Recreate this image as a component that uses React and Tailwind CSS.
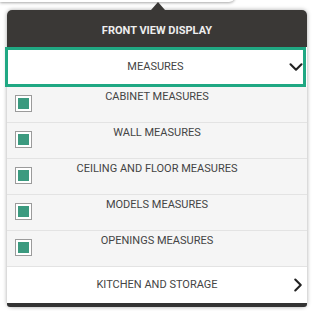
import React from "react";
import { ChevronDown, ChevronRight } from "lucide-react";

const items = [
  "CABINET MEASURES",
  "WALL MEASURES",
  "CEILING AND FLOOR MEASURES",
  "MODELS MEASURES",
  "OPENINGS MEASURES",
];

const Checkbox = () => (
  <div className="w-[17px] h-[17px] border border-[#9b9b9b] bg-white p-[2px]">
    <div className="w-full h-full bg-[#3b9a7f]" />
  </div>
);

const App = () => {
  return (
    <div
      className="relative w-[313px] h-[311px] bg-white overflow-hidden"
      style={{ fontFamily: "Roboto, 'Liberation Sans', sans-serif" }}
    >
      {/* button above the popover */}
      <div className="absolute left-0 -top-[20px] w-[235px] h-[22px] bg-white rounded-br-[6px] shadow-[0_1px_3px_rgba(0,0,0,0.35)]" />

      <div className="relative ml-[7px] mt-[10px] w-[300px] shadow-[0_0_4px_rgba(0,0,0,0.35)] rounded-[5px]">
        {/* caret */}
        <div className="absolute left-[144px] -top-[8px] w-0 h-0 border-l-[7px] border-r-[7px] border-b-[8px] border-l-transparent border-r-transparent border-b-[#3a3836]" />

        {/* Header */}
        <div className="h-[37px] bg-[#3a3836] rounded-t-[5px] flex items-center justify-center pt-[6px]">
          <span className="text-[11px] font-bold text-[#eeeeee]">FRONT VIEW DISPLAY</span>
        </div>

        {/* Select */}
        <div className="relative -ml-[2px] w-[301px] h-[40px] border-[3px] border-[#20a883] bg-white grid grid-cols-[14px_1fr_14px] items-center">
          <span />
          <span className="text-center text-[11px] text-[#444444]">MEASURES</span>
          <ChevronDown className="w-[22px] h-[22px] text-[#222222] justify-self-center" strokeWidth={2.3} />
        </div>

        {/* Options */}
        {items.map((label) => (
          <div
            key={label}
            className="h-[36px] bg-[#f5f5f5] border-b border-[#e3e3e3] grid grid-cols-[26px_1fr_26px]"
          >
            <div className="pl-[8px] pt-[8px]">
              <Checkbox />
            </div>
            <span className="text-center text-[11px] text-[#444444] pt-[3px] leading-[13px]">{label}</span>
            <span />
          </div>
        ))}

        {/* Kitchen */}
        <div className="h-[36px] bg-white grid grid-cols-[19px_1fr_19px] items-center">
          <span />
          <span className="text-center text-[11px] text-[#444444]">KITCHEN AND STORAGE</span>
          <ChevronRight className="w-[22px] h-[22px] text-[#222222] justify-self-center" strokeWidth={2.3} />
        </div>

        {/* Bottom strip */}
        <div className="h-[4px] bg-[#333333] rounded-b-[3px]" />
      </div>
    </div>
  );
};

export default App;
